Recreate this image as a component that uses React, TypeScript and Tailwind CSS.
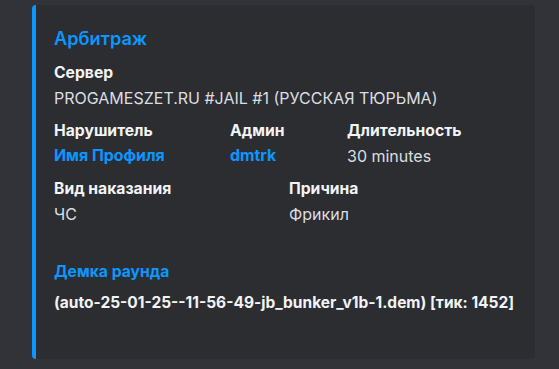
export default function App() {
  const font = { fontFamily: "Inter, 'Noto Sans', sans-serif" };
  const name = "h-[20px] leading-[20px] text-[15.7px] font-bold text-[#f2f3f5]";
  const value = "mt-[5px] h-[20px] leading-[20px] text-[16px] text-[#dbdee1]";
  const link = "mt-[5px] h-[20px] leading-[20px] text-[15.9px] font-bold text-[#0a97ff]";
  return (
    <div className="w-[559px] h-[369px] bg-[#313338] pt-[5px] pl-[32px]" style={font}>
      <div className="w-[503px] h-[354px] bg-[#2b2d31] rounded-[4px] border-l-[4px] border-[#0a97ff] pl-[18px] pt-[23px]">
        <div className="h-[20px] leading-[20px] text-[18.2px] font-semibold text-[#0a97ff]">Арбитраж</div>
        <div className="mt-[15px]">
          <div className={name}>Сервер</div>
          <div className={value}>PROGAMESZET.RU #JAIL #1 (РУССКАЯ ТЮРЬМА)</div>
        </div>
        <div className="mt-[13px] flex">
          <div className="w-[176px]">
            <div className={name}>Нарушитель</div>
            <div className={link}>Имя Профиля</div>
          </div>
          <div className="w-[117px]">
            <div className={name}>Админ</div>
            <div className={link}>dmtrk</div>
          </div>
          <div>
            <div className={name}>Длительность</div>
            <div className={value}>30 minutes</div>
          </div>
        </div>
        <div className="mt-[13px] flex">
          <div className="w-[235px]">
            <div className={name}>Вид наказания</div>
            <div className={value}>ЧС</div>
          </div>
          <div>
            <div className={name}>Причина</div>
            <div className={value}>Фрикил</div>
          </div>
        </div>
        <div className="mt-[38px]">
          <div className="h-[20px] leading-[20px] text-[15.7px] font-bold text-[#0a97ff]">Демка раунда</div>
          <div className="mt-[11px] h-[20px] leading-[20px] text-[15.5px] font-bold text-[#f2f3f5]">(auto-25-01-25--11-56-49-jb_bunker_v1b-1.dem) [тик: 1452]</div>
        </div>
      </div>
    </div>
  );
}
